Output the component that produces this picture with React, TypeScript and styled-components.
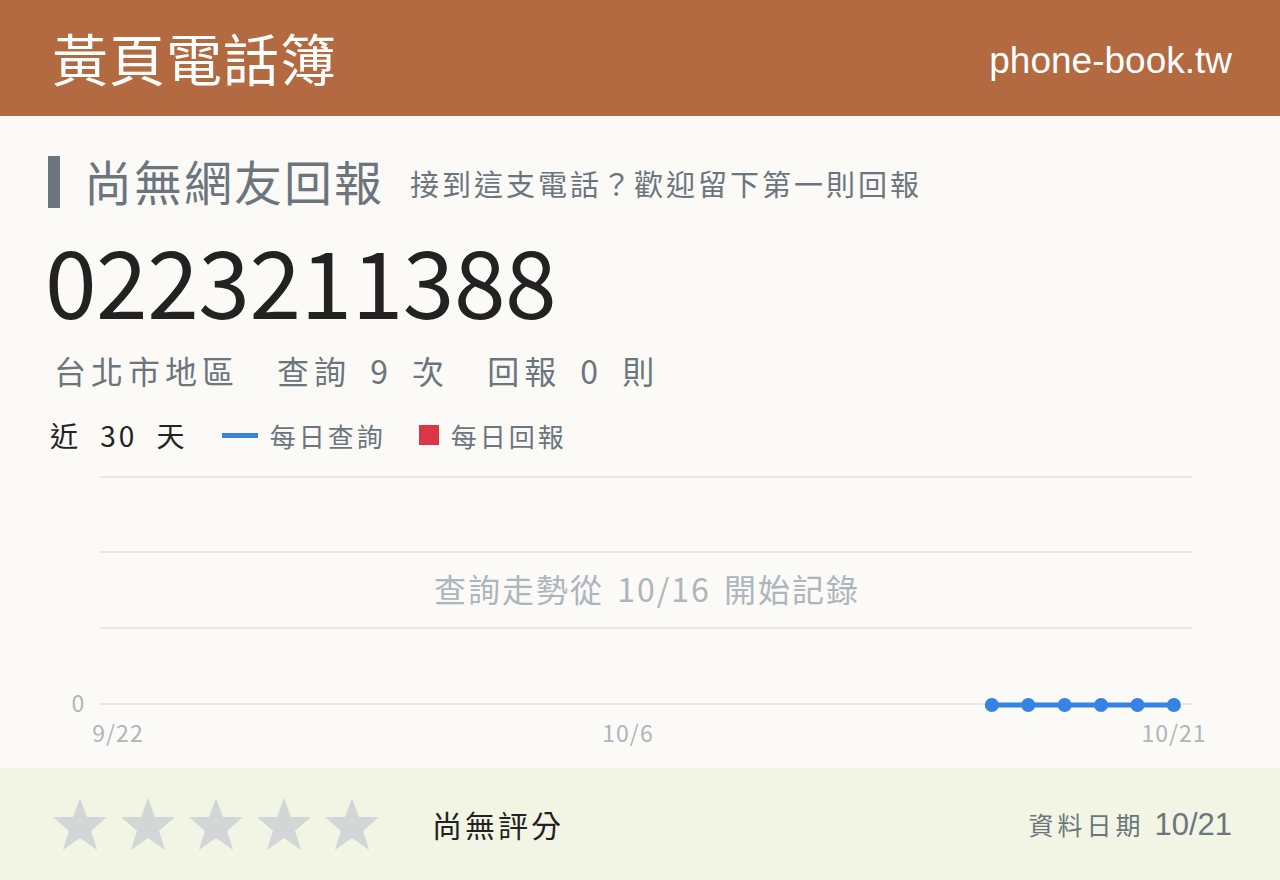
import React from 'react'
import styled, { createGlobalStyle } from 'styled-components'

const GlobalStyle = createGlobalStyle`
  html, body {
    margin: 0;
    padding: 0;
    background: #fbfaf7;
  }
  body {
    font-family: "Noto Sans CJK TC", "Noto Sans", sans-serif;
  }
`

const Page = styled.div`
  width: 1280px;
  height: 880px;
  display: flex;
  flex-direction: column;
  overflow: hidden;
`

const Header = styled.header`
  height: 116px;
  background: #b46a41;
  color: #fff;
  display: flex;
  align-items: center;
  justify-content: space-between;
  padding: 0 48px 0 52px;
  box-sizing: border-box;
  flex-shrink: 0;
`

const Brand = styled.div`
  font-size: 56px;
  line-height: 1;
  letter-spacing: 1px;
  margin-top: -2px;
`

const Domain = styled.div`
  font-family: "Liberation Sans", Arial, sans-serif;
  font-size: 37px;
  line-height: 1;
  margin-top: 4px;
`

const Main = styled.main`
  flex: 1;
  padding: 38px 48px 0;
  display: flex;
  flex-direction: column;
`

const TitleRow = styled.div`
  display: flex;
  align-items: center;
  color: #6c757d;
  margin-top: 2px;
`

const TitleBar = styled.span`
  width: 12px;
  height: 52px;
  background: #6c757d;
  margin-right: 24px;
`

const Title = styled.h1`
  margin: 0;
  font-size: 48px;
  font-weight: 400;
  line-height: 1;
  letter-spacing: 2px;
  margin-top: -4px;
`

const Subtitle = styled.span`
  font-size: 29px;
  letter-spacing: 3px;
  margin-left: 26px;
  margin-top: 2px;
`

const Number = styled.div`
  font-size: 93px;
  line-height: 1;
  color: #222;
  margin-top: 24px;
  letter-spacing: -0.5px;
  margin-left: -3px;
`

const Stats = styled.div`
  display: flex;
  gap: 38px;
  font-size: 32px;
  color: #6c757d;
  margin-top: 22px;
  margin-left: 6px;
  letter-spacing: 5px;
  word-spacing: 7px;
`

const Legend = styled.div`
  display: flex;
  align-items: center;
  margin-top: 22px;
  font-size: 26px;
  color: #6c757d;
  letter-spacing: 3px;
`

const Period = styled.span`
  color: #222;
  font-size: 28px;
  letter-spacing: 3px;
  word-spacing: 10px;
  margin-left: 2px;
  margin-right: 34px;
`

const Swatch = styled.span<{ $color: string; $line?: boolean }>`
  display: inline-block;
  width: ${(p) => (p.$line ? '36px' : '20px')};
  height: ${(p) => (p.$line ? '5px' : '20px')};
  background: ${(p) => p.$color};
  margin-right: 12px;
`

const LegendItem = styled.span`
  display: flex;
  align-items: center;
  margin-right: 33px;
`

const ChartBox = styled.div`
  margin-top: 6px;
  margin-left: -48px;
`

const Footer = styled.footer`
  height: 112px;
  background: #f2f5e3;
  display: flex;
  align-items: center;
  padding: 0 48px 0 52px;
  flex-shrink: 0;
`

const Stars = styled.div`
  display: flex;
  gap: 12px;
`

const Rating = styled.span`
  font-size: 30px;
  letter-spacing: 3px;
  color: #222;
  margin-left: 52px;
`

const DataDate = styled.div`
  margin-left: auto;
  color: #6c757d;
  font-size: 25px;
  letter-spacing: 4px;
  display: flex;
  align-items: baseline;
  gap: 10px;
`

const DateValue = styled.span`
  font-family: "Liberation Sans", Arial, sans-serif;
  font-size: 31px;
  letter-spacing: 0;
`

const Star = () => (
  <svg width="56" height="54" viewBox="0 0 56 54">
    <polygon
      points="28,1 35,20 55,20 39,34 45,53 28,41 11,53 17,34 1,20 21,20"
      fill="#d4d5d6"
    />
  </svg>
)

// 30 days, 9/22 .. 10/21; data recorded from index 24 onward
const left = 118
const step = 36.41
const grid = [16, 91, 167, 243]
const points = [24, 25, 26, 27, 28, 29].map((i) => left + i * step)
const labelFont = 'Noto Sans CJK TC, sans-serif'

const Chart = () => (
  <svg width="1280" height="290" viewBox="0 0 1280 290">
    {grid.map((y) => (
      <line key={y} x1="100" x2="1192" y1={y} y2={y} stroke="#e6e8ec" strokeWidth="2" />
    ))}
    <text x="78" y="251" textAnchor="middle" fontSize="23" fill="#adb5bd" fontFamily={labelFont}>0</text>
    <text x="118" y="281" textAnchor="middle" fontSize="23" letterSpacing="1" fill="#adb5bd" fontFamily={labelFont}>9/22</text>
    <text x="628" y="281" textAnchor="middle" fontSize="23" letterSpacing="1" fill="#adb5bd" fontFamily={labelFont}>10/6</text>
    <text x="1174" y="281" textAnchor="middle" fontSize="23" letterSpacing="1" fill="#adb5bd" fontFamily={labelFont}>10/21</text>
    <text x="647" y="141" textAnchor="middle" fontSize="32" fill="#adb5bd" letterSpacing="2" wordSpacing="4" fontFamily={labelFont}>查詢走勢從 10/16 開始記錄</text>
    <polyline
      points={points.map((x) => `${x},244`).join(' ')}
      fill="none"
      stroke="#3584e4"
      strokeWidth="5"
    />
    {points.map((x) => (
      <circle key={x} cx={x} cy="244" r="7" fill="#3584e4" />
    ))}
  </svg>
)

export default function App() {
  return (
    <Page>
      <GlobalStyle />
      <Header>
        <Brand>黃頁電話簿</Brand>
        <Domain>phone-book.tw</Domain>
      </Header>
      <Main>
        <TitleRow>
          <TitleBar />
          <Title>尚無網友回報</Title>
          <Subtitle>接到這支電話？歡迎留下第一則回報</Subtitle>
        </TitleRow>
        <Number>0223211388</Number>
        <Stats>
          <span>台北市地區</span>
          <span>查詢 9 次</span>
          <span>回報 0 則</span>
        </Stats>
        <Legend>
          <Period>近 30 天</Period>
          <LegendItem>
            <Swatch $color="#3584e4" $line />
            每日查詢
          </LegendItem>
          <LegendItem>
            <Swatch $color="#dc3545" />
            每日回報
          </LegendItem>
        </Legend>
        <ChartBox>
          <Chart />
        </ChartBox>
      </Main>
      <Footer>
        <Stars>
          {[0, 1, 2, 3, 4].map((i) => (
            <Star key={i} />
          ))}
        </Stars>
        <Rating>尚無評分</Rating>
        <DataDate>
          資料日期
          <DateValue>10/21</DateValue>
        </DataDate>
      </Footer>
    </Page>
  )
}
